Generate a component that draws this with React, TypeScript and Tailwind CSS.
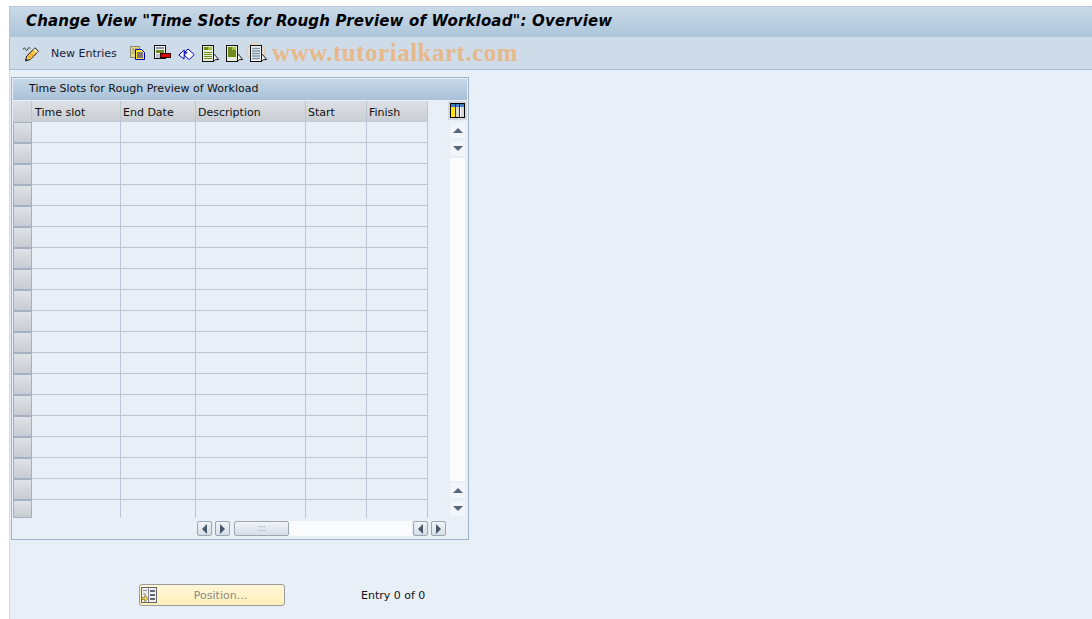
const columns = [
  { label: 'Time slot', width: 'w-[89px] pl-[3px]' },
  { label: 'End Date', width: 'w-[75px] pl-[2px]' },
  { label: 'Description', width: 'w-[110px] pl-[2px]' },
  { label: 'Start', width: 'w-[61px] pl-[2px]' },
  { label: 'Finish', width: 'w-[61px] pl-[2px]' },
];

const rows = Array.from({ length: 19 }, (_, i) => i);

function PencilIcon() {
  return (
    <svg width="18" height="16" viewBox="0 0 18 16">
      <path d="M1 3.5c.8-2 1.8-2 2.5-.3s1.6 1.8 2.2 0 1.5-2 2.6-.8" fill="none" stroke="#333" strokeWidth="1" />
      <path d="M3.5 15l1.2-5L13 1.8l3.6 3.4-8.2 8.3z" fill="#fbc54a" stroke="#222" strokeWidth="1" />
      <path d="M6 9.5l3.5 3M8 7.5l3.5 3" stroke="#e88a20" strokeWidth="1" />
      <path d="M12 3l3.5 3.4" stroke="#e9e9e9" strokeWidth="1.5" />
      <path d="M3.5 15l.6-2.4 1.9 1.7z" fill="#222" />
    </svg>
  );
}

function CopyIcon() {
  return (
    <svg width="18" height="16" viewBox="0 0 18 16">
      <rect x="0.5" y="0.5" width="9" height="11" fill="#e4d98c" stroke="#8a8a70" />
      <path d="M2 3h6M2 5h6M2 7h6" stroke="#a09a60" />
      <path d="M5.5 3.5h6l3 3v7h-9z" fill="#ffe930" stroke="#0000c8" />
      <path d="M7 7h6M7 9h6M7 11h6" stroke="#0000c8" />
    </svg>
  );
}

function SheetIcon({ variant }: { variant: 'delete' | 'first' | 'last' | 'plain' }) {
  const green = variant === 'first' || variant === 'last';
  return (
    <svg width="18" height="18" viewBox="0 0 18 18" className="overflow-visible">
      {variant === 'plain' && <circle cx="6" cy="7" r="9" fill="#f3e3d2" fillOpacity="0.5" stroke="#e8b88a" strokeDasharray="1.5 1" />}
      <rect x="0.5" y="0.5" width="11" height={variant === 'delete' ? 13 : 16} fill={green ? '#e8efd8' : '#f2f2f2'} stroke="#111" />
      {variant === 'last' && <rect x="2" y="2" width="8" height="10" fill="#6f8a1e" />}
      {variant === 'last' && <path d="M6 2h4v3H6z" fill="#a8c040" />}
      {variant === 'first' && <rect x="2" y="2" width="8" height="3" fill="#6f8a1e" />}
      {variant === 'first' && <path d="M6 2h4v3H6z" fill="#a8c040" />}
      {variant === 'first' && <path d="M2 7.5h8M2 9.5h8M2 11.5h8M2 13.5h8" stroke="#6f8a1e" />}
      {variant === 'plain' && <path d="M2 3.5h8M2 6h8M2 8.5h8M2 11h8M2 13.5h8" stroke="#7e94ac" strokeWidth="1.4" />}
      {variant === 'delete' && <rect x="2" y="2" width="8" height="2" fill="#8a98a8" />}
      {variant === 'delete' && <rect x="2" y="5" width="8" height="3" fill="#6f8a1e" />}
      {variant === 'delete' && <path d="M2 10h4M2 12h4" stroke="#8a98a8" />}
      {variant === 'delete' ? (
        <rect x="6.5" y="8.5" width="10" height="4" fill="#e00000" stroke="#300" strokeWidth="1" />
      ) : (
        <path d="M11.5 8.5v8l2-1.8 3.2-.2z" fill="#fff" stroke="#111" />
      )}
    </svg>
  );
}

function UndoIcon() {
  return (
    <svg width="18" height="16" viewBox="0 0 18 16">
      <path d="M.8 9l5.4-5v2.6L10 3l6.2 5.6-5 5-5-4.6 3-2.6H6.200v2.200L6 13z" fill="#fff" stroke="#0000c8" strokeWidth="1" strokeLinejoin="round" />
    </svg>
  );
}

function ColumnsIcon() {
  return (
    <svg width="15" height="15" viewBox="0 0 15 15">
      <rect x="0.5" y="0.5" width="14" height="14" fill="#fff" stroke="#000" />
      <rect x="1" y="1" width="13" height="3" fill="#3f80c0" />
      <rect x="1" y="4" width="4" height="10" fill="#ffe600" />
      <rect x="6" y="4" width="3" height="10" fill="#d8d8d8" />
      <rect x="11" y="4" width="3" height="10" fill="#d8d8d8" />
      <path d="M5.5 1v13M9.500 1v13" stroke="#333" />
    </svg>
  );
}

function PositionIcon() {
  return (
    <svg width="16" height="16" viewBox="0 0 16 16">
      <rect x="0.5" y="0.5" width="15" height="15" fill="#eef0f0" stroke="#666" />
      <path d="M9 4h5M9 8h5M9 12h5" stroke="#667" strokeWidth="2" />
      <path d="M7.5 1v14" stroke="#889" />
      <path d="M2 3.500h4M2 7h3" stroke="#889" />
      <path d="M.8 10.500h3V8.200l3.400 3.300-3.400 3.300v-2.300h-3z" fill="#f6d860" stroke="#7a6a20" strokeWidth="0.7" />
    </svg>
  );
}

function ScrollStep({ direction }: { direction: 'up' | 'down' }) {
  return (
    <div className="w-[15px] h-[15px] bg-[#f2f5f9] flex items-center justify-center">
      <div
        className={
          direction === 'up'
            ? 'w-0 h-0 border-x-[5px] border-x-transparent border-b-[5px] border-b-[#54677a]'
            : 'w-0 h-0 border-x-[5px] border-x-transparent border-t-[5px] border-t-[#54677a]'
        }
      />
    </div>
  );
}

function HScrollButton({ direction }: { direction: 'left' | 'right' }) {
  return (
    <div className="w-[15px] h-[15px] bg-gradient-to-b from-[#f1f4f7] to-[#d6dee6] border border-[#9aa7b3] rounded-[2px] flex items-center justify-center">
      <div
        className={
          direction === 'left'
            ? 'w-0 h-0 border-y-[5px] border-y-transparent border-r-[5px] border-r-[#46586a]'
            : 'w-0 h-0 border-y-[5px] border-y-transparent border-l-[5px] border-l-[#46586a]'
        }
      />
    </div>
  );
}

function Table() {
  return (
    <div className="ml-px mt-[7px] w-[458px] h-[463px] border border-[#9db3c9] p-px flex flex-col">
      <div className="h-[21px] shrink-0 pl-[16px] pb-px flex items-center text-[11px] text-[#111] bg-gradient-to-b from-[#c6d7e6] to-[#a9c2d9]">
        Time Slots for Rough Preview of Workload
      </div>
      <div className="flex mt-px">
        <div className="w-[415px]">
          <div className="flex h-[21px]">
            <div className="w-[19px] bg-gradient-to-b from-[#dde0e4] to-[#c9ced4] border-r border-[#bcc6d2]" />
            {columns.map((col) => (
              <div
                key={col.label}
                className={`${col.width} pt-[3px] flex items-center text-[11px] text-[#111] bg-gradient-to-b from-[#dde0e4] to-[#c9ced4] border-r border-[#bcc6d2]`}
              >
                {col.label}
              </div>
            ))}
          </div>
          {rows.map((row) => (
            <div key={row} className="flex h-[21px] last:h-[18px]">
              <div className="w-[19px] bg-gradient-to-b from-[#dfe2e6] to-[#c8cdd3] border border-[#a3b1c0]" />
              {columns.map((col) => (
                <div
                  key={col.label}
                  className={`${col.width} border-r border-[#bcc6d2] ${row === 18 ? '' : 'border-b'}`}
                />
              ))}
            </div>
          ))}
        </div>
        <div className="flex-1 flex flex-col items-center pl-[20px]">
          <div className="w-[19px] h-[19px] bg-[#d3d9df] flex items-center justify-center">
            <ColumnsIcon />
          </div>
          <div className="mt-[3px] flex flex-col gap-[3px] items-center">
            <ScrollStep direction="up" />
            <ScrollStep direction="down" />
          </div>
          <div className="mt-[2px] w-[15px] h-[323px] bg-[#f9fbfd]" />
          <div className="mt-[2px] flex flex-col gap-[3px] items-center">
            <ScrollStep direction="up" />
            <ScrollStep direction="down" />
          </div>
        </div>
      </div>
      <div className="flex gap-[3px] items-center ml-[184px] mt-[3px]">
        <HScrollButton direction="left" />
        <HScrollButton direction="right" />
        <div className="flex h-[15px] w-[178px] ml-px -mr-[2px] bg-[#f9fbfd]">
          <div className="w-[55px] h-[15px] bg-gradient-to-b from-[#f1f4f7] to-[#d6dee6] border border-[#9aa7b3] rounded-[2px] flex items-center justify-center text-[8px] leading-none text-[#8896a3]">
            :::
          </div>
        </div>
        <HScrollButton direction="left" />
        <HScrollButton direction="right" />
      </div>
    </div>
  );
}

export default function App() {
  return (
    <div className="w-[1092px] h-[619px] overflow-hidden bg-white flex" style={{ fontFamily: 'Tahoma, "DejaVu Sans", sans-serif' }}>
      <div className="w-[9px] shrink-0 bg-white" />
      <div className="flex-1 pt-[6px] flex flex-col">
        <div className="h-[31px] shrink-0 pl-[16px] pb-[2px] flex items-center bg-gradient-to-b from-[#c9d9e7] to-[#adc5da] border-t border-l border-[#b4c5d6] text-[15px] tracking-[0.16px] font-bold italic text-black">
          Change View "Time Slots for Rough Preview of Workload": Overview
        </div>
        <div className="h-[33px] shrink-0 flex items-center bg-[#cddce8] border-b border-l border-[#a9bed3] pl-[12px] pt-[2px] relative">
          <PencilIcon />
          <span className="ml-[11px] w-[79px] shrink-0 text-[11px] text-[#1a1a3a]">New Entries</span>
          <div className="flex items-center gap-[6px]">
            <CopyIcon />
            <SheetIcon variant="delete" />
            <UndoIcon />
            <SheetIcon variant="first" />
            <SheetIcon variant="last" />
            <SheetIcon variant="plain" />
          </div>
          <span
            className="absolute left-[262px] top-[-3px] text-[25px] font-bold text-[#e8b88a] tracking-[0.5px]"
            style={{ fontFamily: '"Liberation Serif", serif' }}
          >
            www.tutorialkart.com
          </span>
        </div>
        <div className="flex-1 bg-[#e8eff7] border-l border-[#d2dbe6] flex flex-col">
          <Table />
          <div className="flex items-center mt-[44px] ml-[129px]">
            <div className="w-[146px] h-[22px] rounded-[3px] border border-[#9b9b9b] bg-gradient-to-b from-[#fff6d8] to-[#fff0b8] flex items-center pl-px">
              <PositionIcon />
              <span className="flex-1 text-center pt-[2px] text-[11px] text-[#8a8a8a]">Position...</span>
            </div>
            <span className="ml-[76px] pt-[2px] text-[11px] text-[#111]">Entry 0 of 0</span>
          </div>
        </div>
      </div>
    </div>
  );
}
